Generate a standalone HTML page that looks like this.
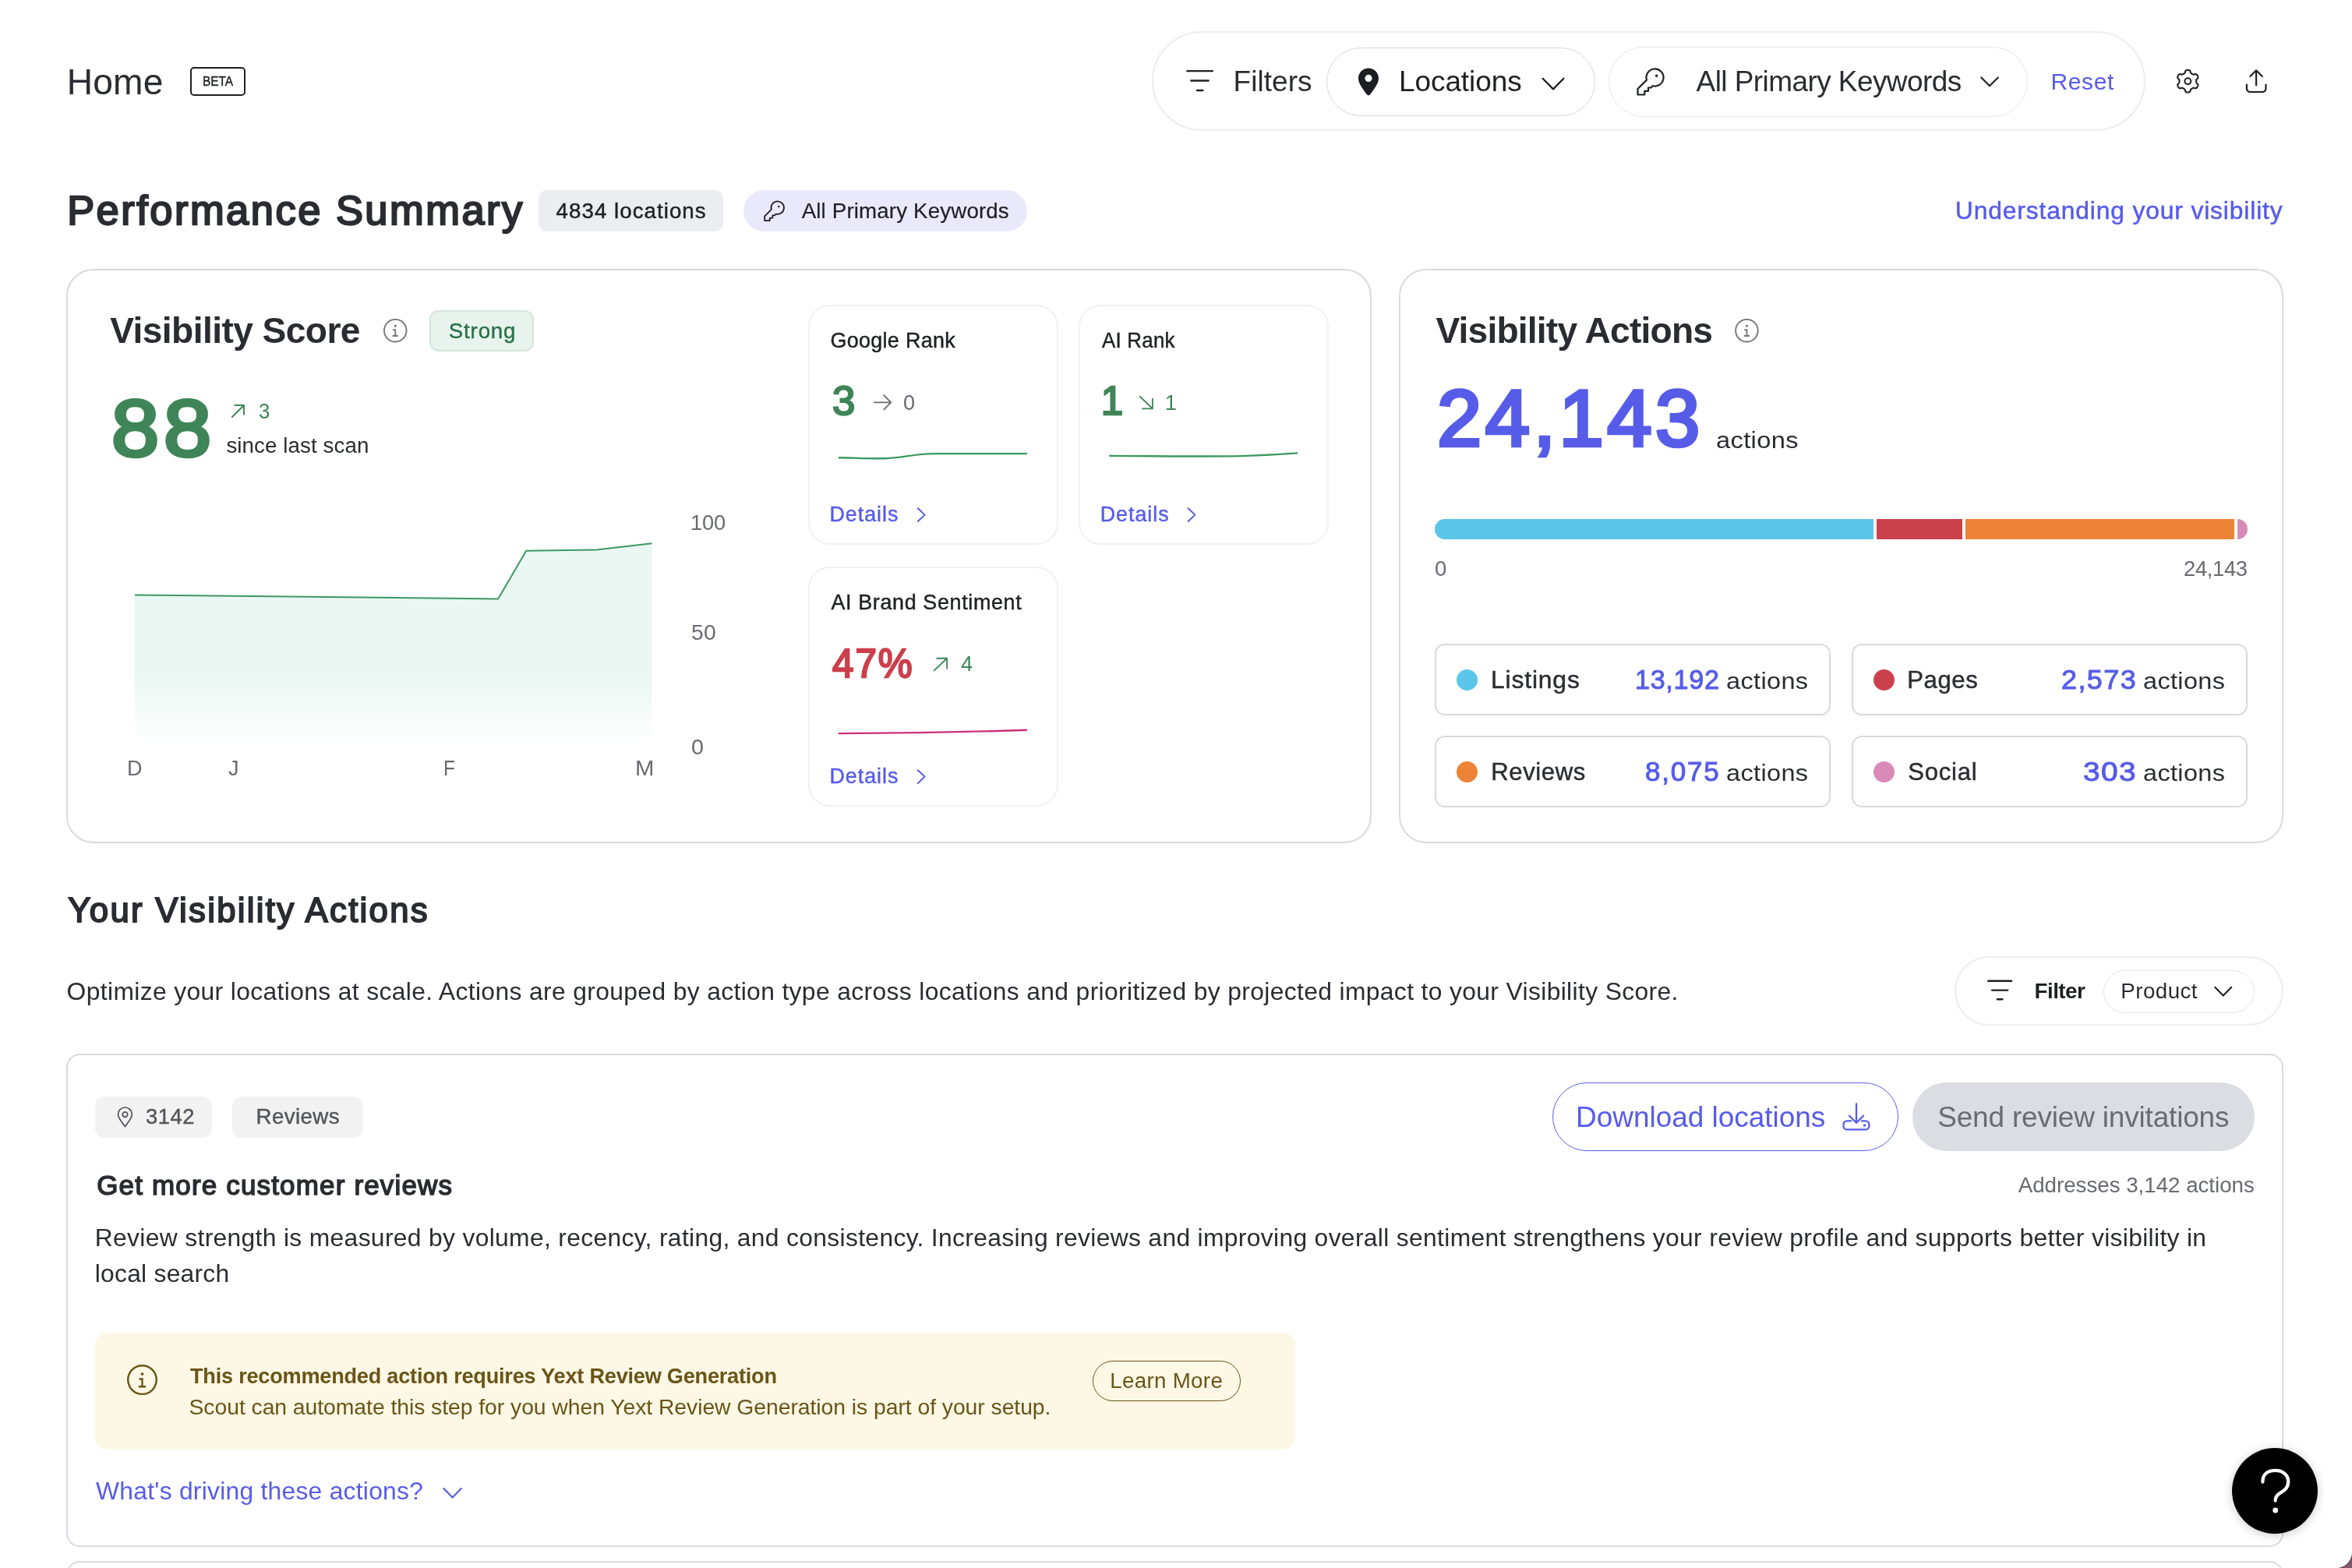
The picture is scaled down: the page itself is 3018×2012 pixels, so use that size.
<!DOCTYPE html><html lang="en"><head><meta charset="utf-8"><title>Home</title><style>
*{box-sizing:border-box;margin:0;padding:0}
html,body{width:3018px;height:2012px;overflow:hidden}
body{background:#84596a;font-family:"Liberation Sans",sans-serif;color:#2b2c31}
#page{filter:opacity(1);position:relative;width:3018px;height:2012px;background:#fff;border-bottom-right-radius:20px;overflow:hidden;box-shadow:0 0 0 1px #4b2b3a}
.b,.t,.i,.g{position:absolute}
.g{left:0;top:0}
.t{white-space:pre;line-height:1;font-weight:400;transform-origin:0 0}
.i{overflow:visible;display:block}
.card{border:2px solid #d9dae0;background:#fff}
.mini{border:2px solid #f0f0f5;border-radius:28px;background:#fff}
.leg{border:2px solid #d9dae0;border-radius:13px;background:#fff}
.pill{border-radius:999px}
</style></head><body><div id="page">
<header class="g">
<div class="b" style="left:244px;top:86px;width:71px;height:37px;border:2px solid #1f2024;border-radius:5px"></div>
<div class="b pill" style="left:1478px;top:40px;width:1275px;height:128px;border:2px solid #ececf3"></div>
<div class="b pill" style="left:1702px;top:61px;width:345px;height:88px;border:1.5px solid #d6d6da"></div>
<div class="b pill" style="left:2064px;top:60px;width:538px;height:90px;border:1.5px solid #e6e6ea"></div>
<h1 class="t" style="left:85.7px;top:82px;font-size:46.2px;color:#2b2c31;letter-spacing:0.19px;">Home</h1>
<span class="t" style="left:260.0px;top:96px;font-size:17.22px;color:#1f2024;letter-spacing:-0.098px;-webkit-text-stroke:0.4px #1f2024;transform:scaleX(0.9);">BETA</span>
<span class="t" style="left:1582.5px;top:87px;font-size:36.96px;color:#2b2c31;letter-spacing:0.064px;">Filters</span>
<span class="t" style="left:1795.0px;top:87px;font-size:36.96px;color:#1f2024;letter-spacing:-0.066px;">Locations</span>
<span class="t" style="left:2176.6px;top:87px;font-size:36.96px;color:#2b2c31;letter-spacing:-0.556px;">All Primary Keywords</span>
<a class="t" style="left:2631.6px;top:90px;font-size:30.03px;color:#575ce8;letter-spacing:0.554px;">Reset</a>
<svg class="i" style="left:1518px;top:84px" width="44" height="40" viewBox="1518 84 44 40" ><path d="M1523.3 91.2 H1555.9 M1528.3 103.5 H1550.8 M1536 116 H1543.5" stroke="#1f2024" stroke-width="2.3" stroke-linecap="round" fill="none"/></svg>
<svg class="i" style="left:1743px;top:87px" width="26" height="36" viewBox="1743 87 26 36" ><path transform="translate(1743 87.4)" fill-rule="evenodd" fill="#1c1d22" d="M13 0 C5.8 0 0 5.8 0 13 C0 19.2 4.2 24.2 10.9 33.9 a2.5 2.5 0 0 0 4.2 0 C21.8 24.2 26 19.2 26 13 C26 5.8 20.2 0 13 0 Z M13 8.4 a4.6 4.6 0 1 0 0 9.2 a4.6 4.6 0 1 0 0 -9.2 Z"/></svg>
<svg class="i" style="left:1976px;top:97px" width="34" height="22" viewBox="1976 97 34 22" ><path d="M1979.6 100.8 L1993.0 114.4 L2006.4 100.8" fill="none" stroke="#1f2024" stroke-width="2.3" stroke-linecap="round" stroke-linejoin="round"/></svg>
<svg class="i" style="left:2098px;top:86px" width="40" height="38" viewBox="2098 86 40 38" ><g transform="translate(2099.9 87.5) scale(1)" fill="none" stroke="#1f2024" stroke-width="2.20" stroke-linejoin="round"><path d="M13 15.1 L1.6 26.5 V34 H10.4 V29.3 H15.1 V25 H18.6 L20.9 22.7 A11.04 11.04 0 1 0 13 15.1 Z"/><circle cx="25.7" cy="9.8" r="1.7" fill="#1f2024" stroke="none"/></g></svg>
<svg class="i" style="left:2538px;top:95px" width="30" height="20" viewBox="2538 95 30 20" ><path d="M2542.3 99.4 L2553.05 110.2 L2563.8 99.4" fill="none" stroke="#1f2024" stroke-width="2.1" stroke-linecap="round" stroke-linejoin="round"/></svg>
<svg class="i" style="left:2790px;top:86px" width="34" height="36" viewBox="2790 86 34 36" ><path d="M2818.20 104.20 L2818.20 104.49 L2818.20 104.77 L2818.19 105.06 L2818.19 105.35 L2818.21 105.64 L2818.27 105.94 L2818.39 106.25 L2818.62 106.61 L2818.99 107.01 L2819.47 107.46 L2819.93 107.94 L2820.26 108.41 L2820.43 108.85 L2820.46 109.25 L2820.41 109.63 L2820.31 109.99 L2820.18 110.35 L2820.03 110.69 L2819.87 111.02 L2819.68 111.35 L2819.49 111.67 L2819.28 111.98 L2819.06 112.29 L2818.83 112.57 L2818.56 112.84 L2818.26 113.07 L2817.89 113.24 L2817.43 113.32 L2816.86 113.27 L2816.21 113.11 L2815.58 112.92 L2815.04 112.80 L2814.62 112.77 L2814.29 112.83 L2814.00 112.93 L2813.74 113.06 L2813.49 113.20 L2813.24 113.35 L2813.00 113.50 L2812.75 113.64 L2812.50 113.78 L2812.25 113.92 L2812.00 114.06 L2811.76 114.21 L2811.51 114.37 L2811.28 114.56 L2811.06 114.83 L2810.88 115.20 L2810.71 115.73 L2810.56 116.37 L2810.38 117.01 L2810.13 117.53 L2809.84 117.89 L2809.51 118.12 L2809.15 118.27 L2808.79 118.37 L2808.42 118.43 L2808.05 118.47 L2807.67 118.49 L2807.30 118.50 L2806.93 118.49 L2806.55 118.47 L2806.18 118.43 L2805.81 118.37 L2805.45 118.27 L2805.09 118.12 L2804.76 117.89 L2804.47 117.53 L2804.22 117.01 L2804.04 116.37 L2803.89 115.73 L2803.72 115.20 L2803.54 114.83 L2803.32 114.56 L2803.09 114.37 L2802.84 114.21 L2802.60 114.06 L2802.35 113.92 L2802.10 113.78 L2801.85 113.64 L2801.60 113.50 L2801.36 113.35 L2801.11 113.20 L2800.86 113.06 L2800.60 112.93 L2800.31 112.83 L2799.98 112.77 L2799.56 112.80 L2799.02 112.92 L2798.39 113.11 L2797.74 113.27 L2797.17 113.32 L2796.71 113.24 L2796.34 113.07 L2796.04 112.84 L2795.77 112.57 L2795.54 112.29 L2795.32 111.98 L2795.11 111.67 L2794.92 111.35 L2794.73 111.02 L2794.57 110.69 L2794.42 110.35 L2794.29 109.99 L2794.19 109.63 L2794.14 109.25 L2794.17 108.85 L2794.34 108.41 L2794.67 107.94 L2795.13 107.46 L2795.61 107.01 L2795.98 106.61 L2796.21 106.25 L2796.33 105.94 L2796.39 105.64 L2796.41 105.35 L2796.41 105.06 L2796.40 104.77 L2796.40 104.49 L2796.40 104.20 L2796.40 103.91 L2796.40 103.63 L2796.41 103.34 L2796.41 103.05 L2796.39 102.76 L2796.33 102.46 L2796.21 102.15 L2795.98 101.79 L2795.61 101.39 L2795.13 100.94 L2794.67 100.46 L2794.34 99.99 L2794.17 99.55 L2794.14 99.15 L2794.19 98.77 L2794.29 98.41 L2794.42 98.05 L2794.57 97.71 L2794.73 97.38 L2794.92 97.05 L2795.11 96.73 L2795.32 96.42 L2795.54 96.11 L2795.77 95.83 L2796.04 95.56 L2796.34 95.33 L2796.71 95.16 L2797.17 95.08 L2797.74 95.13 L2798.39 95.29 L2799.02 95.48 L2799.56 95.60 L2799.98 95.63 L2800.31 95.57 L2800.60 95.47 L2800.86 95.34 L2801.11 95.20 L2801.36 95.05 L2801.60 94.90 L2801.85 94.76 L2802.10 94.62 L2802.35 94.48 L2802.60 94.34 L2802.84 94.19 L2803.09 94.03 L2803.32 93.84 L2803.54 93.57 L2803.72 93.20 L2803.89 92.67 L2804.04 92.03 L2804.22 91.39 L2804.47 90.87 L2804.76 90.51 L2805.09 90.28 L2805.45 90.13 L2805.81 90.03 L2806.18 89.97 L2806.55 89.93 L2806.93 89.91 L2807.30 89.90 L2807.67 89.91 L2808.05 89.93 L2808.42 89.97 L2808.79 90.03 L2809.15 90.13 L2809.51 90.28 L2809.84 90.51 L2810.13 90.87 L2810.38 91.39 L2810.56 92.03 L2810.71 92.67 L2810.88 93.20 L2811.06 93.57 L2811.28 93.84 L2811.51 94.03 L2811.76 94.19 L2812.00 94.34 L2812.25 94.48 L2812.50 94.62 L2812.75 94.76 L2813.00 94.90 L2813.24 95.05 L2813.49 95.20 L2813.74 95.34 L2814.00 95.47 L2814.29 95.57 L2814.62 95.63 L2815.04 95.60 L2815.58 95.48 L2816.21 95.29 L2816.86 95.13 L2817.43 95.08 L2817.89 95.16 L2818.26 95.33 L2818.56 95.56 L2818.83 95.83 L2819.06 96.11 L2819.28 96.42 L2819.49 96.73 L2819.68 97.05 L2819.87 97.38 L2820.03 97.71 L2820.18 98.05 L2820.31 98.41 L2820.41 98.77 L2820.46 99.15 L2820.43 99.55 L2820.26 99.99 L2819.93 100.46 L2819.47 100.94 L2818.99 101.39 L2818.62 101.79 L2818.39 102.15 L2818.27 102.46 L2818.21 102.76 L2818.19 103.05 L2818.19 103.34 L2818.20 103.63 L2818.20 103.91Z" fill="none" stroke="#1f2024" stroke-width="2.1" stroke-linejoin="round"/><circle cx="2807.3" cy="104.2" r="3.9" fill="none" stroke="#1f2024" stroke-width="2.1"/></svg>
<svg class="i" style="left:2880px;top:87px" width="30" height="34" viewBox="2880 87 30 34" ><path d="M2895.1 109.5 V90.6 M2887.4 98 L2895.1 90.3 L2902.8 98 M2882.9 108.6 V113.5 a4.5 4.5 0 0 0 4.5 4.5 H2903 a4.5 4.5 0 0 0 4.5 -4.5 V108.6" fill="none" stroke="#1f2024" stroke-width="2.2" stroke-linecap="round" stroke-linejoin="round"/></svg>
</header>
<section class="g">
<div class="b" style="left:691px;top:244px;width:237px;height:53px;background:#ecedf1;border-radius:11px"></div>
<div class="b pill" style="left:954px;top:244px;width:363.6px;height:53px;background:#e9e9fb"></div>
<svg class="i" style="left:979px;top:256px" width="30" height="29" viewBox="979 256 30 29" ><g transform="translate(980 257.6) scale(0.75)" fill="none" stroke="#1f2024" stroke-width="2.40" stroke-linejoin="round"><path d="M13 15.1 L1.6 26.5 V34 H10.4 V29.3 H15.1 V25 H18.6 L20.9 22.7 A11.04 11.04 0 1 0 13 15.1 Z"/><circle cx="25.7" cy="9.8" r="1.7" fill="#1f2024" stroke="none"/></g></svg>
<h2 class="t" style="left:86.14px;top:244px;font-size:52.46px;color:#2b2c31;letter-spacing:2.493px;-webkit-text-stroke:2.29px #2b2c31;">Performance Summary</h2>
<span class="t" style="left:713.62px;top:257px;font-size:27.72px;color:#1f2024;letter-spacing:1.019px;-webkit-text-stroke:0.45px #1f2024;">4834 locations</span>
<span class="t" style="left:1028.7px;top:257px;font-size:27.72px;color:#1f2024;letter-spacing:0.14px;-webkit-text-stroke:0.2px #1f2024;">All Primary Keywords</span>
<a class="t" style="left:2508.85px;top:255px;font-size:31.8px;color:#575ce8;letter-spacing:0.854px;-webkit-text-stroke:0.5px #575ce8;">Understanding your visibility</a>
</section>
<section class="g">
<div class="b card" style="left:85px;top:345px;width:1675px;height:737px;border-radius:35px"></div>
<div class="b" style="left:551px;top:398.4px;width:133.5px;height:52.4px;background:#e9f3ee;border:2px solid #d3e5db;border-radius:12px"></div>
<svg class="i" style="left:491px;top:408px" width="33" height="33" viewBox="491 408 33 33" ><g transform="translate(507.25 424.2) scale(1)" fill="none" stroke="#757575" stroke-width="1.90"><circle r="14.3"/><path d="M-3.1 -0.9 H0 V6.8 M-3.6 6.8 H3.6" stroke-linecap="butt"/><circle cx="0" cy="-5.9" r="1.5" fill="#757575" stroke="none"/></g></svg>
<svg class="i" style="left:296px;top:518px" width="19" height="19" viewBox="296 518 19 19" ><path d="M297.9 535.0 L313 520 M301.22 520 H313 V531.78" fill="none" stroke="#3f8558" stroke-width="1.9" stroke-linecap="round" stroke-linejoin="round"/></svg>
<svg class="i" style="left:160px;top:690px" width="690" height="270" viewBox="160 690 690 270" ><defs><linearGradient id="ag" gradientUnits="userSpaceOnUse" x1="0" y1="697" x2="0" y2="954"><stop offset="0" stop-color="#eaf7f3"/><stop offset="0.66" stop-color="#eaf7f3"/><stop offset="1" stop-color="#eaf7f3" stop-opacity="0"/></linearGradient></defs><path d="M173 763.5 L639.2 768.4 L675.2 706.7 L765.2 705.6 L836.4 697.2 V954 H173 Z" fill="url(#ag)"/><path d="M173 763.5 L639.2 768.4 L675.2 706.7 L765.2 705.6 L836.4 697.2" fill="none" stroke="#3d9960" stroke-width="2" stroke-linejoin="round"/></svg>
<h3 class="t" style="left:141.2px;top:401px;font-size:46.2px;color:#2b2c31;font-weight:700;letter-spacing:-0.602px;">Visibility Score</h3>
<span class="t" style="left:575.83px;top:411px;font-size:27.72px;color:#2b7248;letter-spacing:0.799px;-webkit-text-stroke:0.45px #2b7248;">Strong</span>
<span class="t" style="left:143.01px;top:499px;font-size:102.84px;color:#3f8558;letter-spacing:5.435px;-webkit-text-stroke:4.58px #3f8558;transform:scaleX(1.0697);">88</span>
<span class="t" style="left:332.45px;top:514px;font-size:27.34px;color:#3f8558;transform:scaleX(0.9458);">3</span>
<span class="t" style="left:290.4px;top:558px;font-size:27.72px;color:#2b2c31;letter-spacing:0.087px;">since last scan</span>
<span class="t" style="left:886.0px;top:657px;font-size:27.34px;color:#696a70;letter-spacing:-0.205px;">100</span>
<span class="t" style="left:886.96px;top:798px;font-size:27.34px;color:#696a70;letter-spacing:0.317px;transform:scaleX(1.0364);">50</span>
<span class="t" style="left:886.94px;top:945px;font-size:27.34px;color:#696a70;transform:scaleX(1.0568);">0</span>
<span class="t" style="left:163.35px;top:972px;font-size:27.72px;color:#696a70;transform:scaleX(0.9757);">D</span>
<span class="t" style="left:293.0px;top:972px;font-size:27.72px;color:#696a70;transform:scaleX(0.975);">J</span>
<span class="t" style="left:568.64px;top:972px;font-size:27.72px;color:#696a70;transform:scaleX(0.8782);">F</span>
<span class="t" style="left:815.28px;top:972px;font-size:27.72px;color:#696a70;transform:scaleX(1.0577);">M</span>
<div class="b mini" style="left:1037px;top:391px;width:321px;height:308px;"></div>
<div class="b mini" style="left:1384px;top:391px;width:320.5px;height:308px;"></div>
<div class="b mini" style="left:1037px;top:727px;width:321px;height:308px;"></div>
<svg class="i" style="left:1118px;top:504px" width="30" height="26" viewBox="1118 504 30 26" ><path d="M1121.8 516.4 H1142.8 M1134.2 507.2 L1143.2 516.4 L1134.2 525.6" fill="none" stroke="#696a70" stroke-width="1.8" stroke-linecap="round" stroke-linejoin="round"/></svg>
<svg class="i" style="left:1072px;top:578px" width="250" height="14" viewBox="1072 578 250 14" ><path d="M1075.8 587.3 C1100 587.6 1115 588.6 1135 588.2 C1158 587.6 1172 582.3 1200 582.1 H1318" fill="none" stroke="#3d9960" stroke-width="2.4"/></svg>
<svg class="i" style="left:1174px;top:648px" width="16" height="24" viewBox="1174 648 16 24" ><path d="M1177.8 652.2 L1186.6 660.6 L1177.8 669.0" fill="none" stroke="#575ce8" stroke-width="2" stroke-linecap="round" stroke-linejoin="round"/></svg>
<h4 class="t" style="left:1065.42px;top:424px;font-size:26.88px;color:#1f2024;letter-spacing:0.341px;-webkit-text-stroke:0.45px #1f2024;">Google Rank</h4>
<span class="t" style="left:1068.12px;top:489px;font-size:51.42px;color:#3f8558;-webkit-text-stroke:2.29px #3f8558;transform:scaleX(1.0271);">3</span>
<span class="t" style="left:1158.51px;top:503px;font-size:27.34px;color:#696a70;transform:scaleX(0.9925);">0</span>
<a class="t" style="left:1064.42px;top:647px;font-size:26.88px;color:#575ce8;letter-spacing:0.972px;-webkit-text-stroke:0.45px #575ce8;">Details</a>
<svg class="i" style="left:1460px;top:506px" width="22" height="22" viewBox="1460 506 22 22" ><path d="M1462.6 508.8 L1478.9 524.4 M1466.19 524.4 H1478.9 V511.69" fill="none" stroke="#3f8558" stroke-width="1.9" stroke-linecap="round" stroke-linejoin="round"/></svg>
<svg class="i" style="left:1420px;top:576px" width="250" height="14" viewBox="1420 576 250 14" ><path d="M1423.1 584.9 C1500 585.3 1560 586.3 1600 584.9 C1630 583.9 1650 582.5 1665.2 581.4" fill="none" stroke="#3d9960" stroke-width="2.4"/></svg>
<svg class="i" style="left:1521px;top:648px" width="16" height="24" viewBox="1521 648 16 24" ><path d="M1524.6 652.2 L1533.4 660.6 L1524.6 669.0" fill="none" stroke="#575ce8" stroke-width="2" stroke-linecap="round" stroke-linejoin="round"/></svg>
<h4 class="t" style="left:1413.72px;top:424px;font-size:26.88px;color:#1f2024;letter-spacing:0.244px;-webkit-text-stroke:0.45px #1f2024;transform:scaleX(0.9633);">AI Rank</h4>
<span class="t" style="left:1412.85px;top:489px;font-size:51.42px;color:#3f8558;-webkit-text-stroke:2.29px #3f8558;">1</span>
<span class="t" style="left:1494.8px;top:503px;font-size:27.34px;color:#3f8558;">1</span>
<a class="t" style="left:1411.72px;top:647px;font-size:26.88px;color:#575ce8;letter-spacing:0.972px;-webkit-text-stroke:0.45px #575ce8;">Details</a>
<svg class="i" style="left:1196px;top:842px" width="22" height="22" viewBox="1196 842 22 22" ><path d="M1198.6 860.4 L1215.2 844.8 M1202.25 844.8 H1215.2 V857.75" fill="none" stroke="#3f8558" stroke-width="1.9" stroke-linecap="round" stroke-linejoin="round"/></svg>
<svg class="i" style="left:1072px;top:930px" width="250" height="16" viewBox="1072 930 250 16" ><path d="M1075.8 941.1 C1160 940.6 1250 939 1318 936.8" fill="none" stroke="#cb2f7b" stroke-width="2.4"/></svg>
<svg class="i" style="left:1174px;top:984px" width="16" height="24" viewBox="1174 984 16 24" ><path d="M1177.8 988.2 L1186.6 996.6 L1177.8 1005.0" fill="none" stroke="#575ce8" stroke-width="2" stroke-linecap="round" stroke-linejoin="round"/></svg>
<h4 class="t" style="left:1066.42px;top:760px;font-size:26.88px;color:#1f2024;letter-spacing:0.657px;-webkit-text-stroke:0.45px #1f2024;">AI Brand Sentiment</h4>
<span class="t" style="left:1067.78px;top:826px;font-size:51.42px;color:#cc3f4c;letter-spacing:1.953px;-webkit-text-stroke:2.29px #cc3f4c;transform:scaleX(0.9618);">47%</span>
<span class="t" style="left:1233.2px;top:838px;font-size:27.34px;color:#3f8558;transform:scaleX(0.9997);">4</span>
<a class="t" style="left:1064.42px;top:983px;font-size:26.88px;color:#575ce8;letter-spacing:0.972px;-webkit-text-stroke:0.45px #575ce8;">Details</a>
</section>
<section class="g">
<div class="b card" style="left:1795px;top:345px;width:1135px;height:737px;border-radius:35px"></div>
<svg class="i" style="left:2225px;top:408px" width="33" height="33" viewBox="2225 408 33 33" ><g transform="translate(2241.4 424.2) scale(1)" fill="none" stroke="#757575" stroke-width="1.90"><circle r="14.3"/><path d="M-3.1 -0.9 H0 V6.8 M-3.6 6.8 H3.6" stroke-linecap="butt"/><circle cx="0" cy="-5.9" r="1.5" fill="#757575" stroke="none"/></g></svg>
<div class="b" style="left:1841px;top:666px;width:563px;height:26px;background:#5bc5ea;border-radius:13px 0 0 13px"></div>
<div class="b" style="left:2408px;top:666px;width:110px;height:26px;background:#cb414b"></div>
<div class="b" style="left:2522px;top:666px;width:345px;height:26px;background:#ed8337"></div>
<div class="b" style="left:2871px;top:666px;width:13px;height:26px;background:#d98ab6;border-radius:0 13px 13px 0"></div>
<div class="b leg" style="left:1841px;top:826px;width:507.7px;height:92px;"><div class="b" style="left:26px;top:30.5px;width:27px;height:27px;background:#5bc5ea;border-radius:50%"></div></div>
<div class="b leg" style="left:2376px;top:826px;width:507.7px;height:92px;"><div class="b" style="left:26px;top:30.5px;width:27px;height:27px;background:#cb414b;border-radius:50%"></div></div>
<div class="b leg" style="left:1841px;top:944px;width:507.7px;height:92px;"><div class="b" style="left:26px;top:30.5px;width:27px;height:27px;background:#ed8337;border-radius:50%"></div></div>
<div class="b leg" style="left:2376px;top:944px;width:507.7px;height:92px;"><div class="b" style="left:26px;top:30.5px;width:27px;height:27px;background:#d98ab6;border-radius:50%"></div></div>
<h3 class="t" style="left:1842.4px;top:401px;font-size:46.2px;color:#2b2c31;font-weight:700;letter-spacing:-0.824px;">Visibility Actions</h3>
<span class="t" style="left:1844.09px;top:486px;font-size:102.84px;color:#575ce8;letter-spacing:4.498px;-webkit-text-stroke:4.58px #575ce8;">24,143</span>
<span class="t" style="left:2202.31px;top:550px;font-size:30.03px;color:#2b2c31;letter-spacing:0.332px;transform:scaleX(1.0863);">actions</span>
<span class="t" style="left:1841.19px;top:716px;font-size:27.34px;color:#696a70;transform:scaleX(1.0068);">0</span>
<span class="t" style="left:2802.1px;top:716px;font-size:27.34px;color:#696a70;letter-spacing:-0.339px;">24,143</span>
<span class="t" style="left:1913.17px;top:857px;font-size:31.08px;color:#2b2c31;letter-spacing:0.802px;-webkit-text-stroke:0.45px #2b2c31;transform:scaleX(1.0258);">Listings</span>
<span class="t" style="left:2097.75px;top:854px;font-size:35.03px;color:#575ce8;letter-spacing:0.739px;-webkit-text-stroke:1.0px #575ce8;transform:scaleX(0.9736);">13,192</span>
<span class="t" style="left:2215.42px;top:859px;font-size:30.03px;color:#2b2c31;letter-spacing:0.333px;transform:scaleX(1.082);">actions</span>
<span class="t" style="left:2447.32px;top:857px;font-size:31.08px;color:#2b2c31;letter-spacing:0.566px;-webkit-text-stroke:0.45px #2b2c31;">Pages</span>
<span class="t" style="left:2644.87px;top:854px;font-size:35.03px;color:#575ce8;letter-spacing:1.382px;-webkit-text-stroke:1.0px #575ce8;transform:scaleX(1.0278);">2,573</span>
<span class="t" style="left:2750.42px;top:859px;font-size:30.03px;color:#2b2c31;letter-spacing:0.333px;transform:scaleX(1.0809);">actions</span>
<span class="t" style="left:1913.22px;top:975px;font-size:31.08px;color:#2b2c31;letter-spacing:0.606px;-webkit-text-stroke:0.45px #2b2c31;">Reviews</span>
<span class="t" style="left:2111.0px;top:972px;font-size:35.03px;color:#575ce8;letter-spacing:1.762px;-webkit-text-stroke:1.0px #575ce8;">8,075</span>
<span class="t" style="left:2215.42px;top:977px;font-size:30.03px;color:#2b2c31;letter-spacing:0.333px;transform:scaleX(1.082);">actions</span>
<span class="t" style="left:2448.32px;top:975px;font-size:31.08px;color:#2b2c31;letter-spacing:0.74px;-webkit-text-stroke:0.45px #2b2c31;">Social</span>
<span class="t" style="left:2672.99px;top:972px;font-size:35.03px;color:#575ce8;letter-spacing:1.279px;-webkit-text-stroke:1.0px #575ce8;transform:scaleX(1.1107);">303</span>
<span class="t" style="left:2750.42px;top:977px;font-size:30.03px;color:#2b2c31;letter-spacing:0.333px;transform:scaleX(1.0809);">actions</span>
</section>
<section class="g">
<div class="b pill" style="left:2507.6px;top:1227.2px;width:422px;height:89px;border:2px solid #ececf3"></div>
<div class="b pill" style="left:2699.4px;top:1245.3px;width:193.4px;height:54.4px;border:1.5px solid #e3e3e8"></div>
<svg class="i" style="left:2546px;top:1252px" width="40" height="36" viewBox="2546 1252 40 36" ><path d="M2551.2 1258.8 H2581 M2556 1270.6 H2576.2 M2562.8 1282.3 H2569.4" stroke="#1f2024" stroke-width="2.4" stroke-linecap="round" fill="none"/></svg>
<svg class="i" style="left:2838px;top:1262px" width="30" height="20" viewBox="2838 1262 30 20" ><path d="M2842.3 1266.8 L2852.75 1277.6 L2863.2 1266.8" fill="none" stroke="#1f2024" stroke-width="2.1" stroke-linecap="round" stroke-linejoin="round"/></svg>
<h2 class="t" style="left:87.36px;top:1146px;font-size:43.72px;color:#2b2c31;letter-spacing:2.302px;-webkit-text-stroke:1.91px #2b2c31;">Your Visibility Actions</h2>
<p class="t" style="left:85.6px;top:1257px;font-size:31.8px;color:#2b2c31;letter-spacing:0.367px;">Optimize your locations at scale. Actions are grouped by action type across locations and prioritized by projected impact to your Visibility Score.</p>
<span class="t" style="left:2610.6px;top:1258px;font-size:27.72px;color:#1f2024;font-weight:700;letter-spacing:-0.539px;">Filter</span>
<span class="t" style="left:2721.3px;top:1258px;font-size:27.72px;color:#2b2c31;letter-spacing:0.445px;">Product</span>
<div class="b card" style="left:85px;top:1352px;width:2845px;height:633px;border-radius:17.6px"></div>
<div class="b" style="left:122px;top:1407.2px;width:150px;height:52.8px;background:#f2f2f2;border-radius:12px"></div>
<div class="b" style="left:298.2px;top:1407.2px;width:167.5px;height:52.8px;background:#f2f2f2;border-radius:12px"></div>
<svg class="i" style="left:149px;top:1419px" width="24" height="30" viewBox="149 1419 24 30" ><path d="M160.45 1445.6 C155 1438 151.55 1434.5 151.55 1429.9 a8.9 8.9 0 0 1 17.8 0 C169.35 1434.5 165.9 1438 160.45 1445.6 Z" fill="none" stroke="#4f5056" stroke-width="1.7" stroke-linejoin="round"/><circle cx="160.45" cy="1430.1" r="3.3" fill="none" stroke="#4f5056" stroke-width="1.7"/></svg>
<div class="b pill" style="left:1992px;top:1389px;width:444.2px;height:88px;border:1.5px solid #5a5fe8"></div>
<div class="b pill" style="left:2454px;top:1389px;width:439.2px;height:88px;background:#dcdde2"></div>
<svg class="i" style="left:2362px;top:1413px" width="40" height="40" viewBox="2362 1413 40 40" ><path d="M2382 1416.4 V1440.2 M2373 1431.7 L2382 1440.7 L2391 1431.7 M2375.2 1438.3 H2370 a4.5 4.5 0 0 0 -4.5 4.5 v2.1 a4.5 4.5 0 0 0 4.5 4.5 H2393.9 a4.5 4.5 0 0 0 4.5 -4.5 v-2.1 a4.5 4.5 0 0 0 -4.5 -4.5 H2388.8" fill="none" stroke="#575ce8" stroke-width="2.3" stroke-linecap="round" stroke-linejoin="round"/><circle cx="2392.5" cy="1444" r="1.7" fill="#575ce8"/></svg>
<div class="b" style="left:122px;top:1709.6px;width:1540px;height:150.4px;background:#fdf8e6;border-radius:15px"></div>
<svg class="i" style="left:160px;top:1748px" width="45" height="45" viewBox="160 1748 45 45" ><g transform="translate(182.5 1770.6) scale(1.28)" fill="none" stroke="#6a5417" stroke-width="1.88"><circle r="14.3"/><path d="M-3.1 -0.9 H0 V6.8 M-3.6 6.8 H3.6" stroke-linecap="butt"/><circle cx="0" cy="-5.9" r="1.5" fill="#6a5417" stroke="none"/></g></svg>
<div class="b pill" style="left:1402px;top:1746px;width:190px;height:52px;border:1.5px solid #6a5417"></div>
<svg class="i" style="left:565px;top:1905px" width="32" height="22" viewBox="565 1905 32 22" ><path d="M569.4 1910 L580.5999999999999 1921.6 L591.8 1910" fill="none" stroke="#575ce8" stroke-width="2.2" stroke-linecap="round" stroke-linejoin="round"/></svg>
<span class="t" style="left:187.03px;top:1419px;font-size:27.34px;color:#55565c;letter-spacing:0.584px;-webkit-text-stroke:0.45px #55565c;">3142</span>
<span class="t" style="left:328.53px;top:1419px;font-size:27.72px;color:#55565c;letter-spacing:0.393px;-webkit-text-stroke:0.45px #55565c;">Reviews</span>
<a class="t" style="left:2022.0px;top:1416px;font-size:36.96px;color:#575ce8;letter-spacing:-0.01px;">Download locations</a>
<span class="t" style="left:2486.2px;top:1416px;font-size:36.96px;color:#6b6c72;letter-spacing:-0.167px;">Send review invitations</span>
<h3 class="t" style="left:124.17px;top:1504px;font-size:34.97px;color:#2b2c31;letter-spacing:1.181px;-webkit-text-stroke:1.53px #2b2c31;">Get more customer reviews</h3>
<span class="t" style="left:2589.7px;top:1507px;font-size:27.72px;color:#696a70;letter-spacing:-0.018px;">Addresses 3,142 actions</span>
<p class="t" style="left:121.8px;top:1573px;font-size:31.8px;color:#2b2c31;letter-spacing:0.335px;">Review strength is measured by volume, recency, rating, and consistency. Increasing reviews and improving overall sentiment strengthens your review profile and supports better visibility in</p>
<p class="t" style="left:121.8px;top:1619px;font-size:31.8px;color:#2b2c31;letter-spacing:0.247px;">local search</p>
<strong class="t" style="left:243.5px;top:1751px;font-size:28.35px;color:#6a5417;font-weight:700;letter-spacing:-0.237px;transform:scaleX(0.9569);">This recommended action requires Yext Review Generation</strong>
<p class="t" style="left:242.5px;top:1791px;font-size:28.35px;color:#6a5417;letter-spacing:-0.056px;">Scout can automate this step for you when Yext Review Generation is part of your setup.</p>
<a class="t" style="left:1424.2px;top:1758px;font-size:27.72px;color:#6a5417;letter-spacing:0.318px;">Learn More</a>
<a class="t" style="left:123.1px;top:1898px;font-size:31.8px;color:#575ce8;letter-spacing:0.257px;">What's driving these actions?</a>
<div class="b card" style="left:85px;top:2003px;width:2845px;height:200px;border-radius:17.6px"></div>
</section>
<div class="b" style="left:2864px;top:1858px;width:110px;height:110px;border-radius:50%;box-shadow:0 2px 13px rgba(0,0,0,.2)"></div>
<svg class="i" style="left:2864px;top:1858px" width="110" height="110" viewBox="2864 1858 110 110" ><circle cx="2919" cy="1913" r="55" fill="#000"/><path d="M2903.4 1901.5 C2903.4 1891.5 2910 1886.9 2919.5 1886.9 C2929.5 1886.9 2936.2 1892.5 2936.2 1901.2 C2936.2 1916 2919.6 1913.5 2919.6 1925.6" fill="none" stroke="#fff" stroke-width="4.3" stroke-linecap="round"/><circle cx="2919.7" cy="1938" r="3.4" fill="#fff"/></svg>
</div></body></html>
